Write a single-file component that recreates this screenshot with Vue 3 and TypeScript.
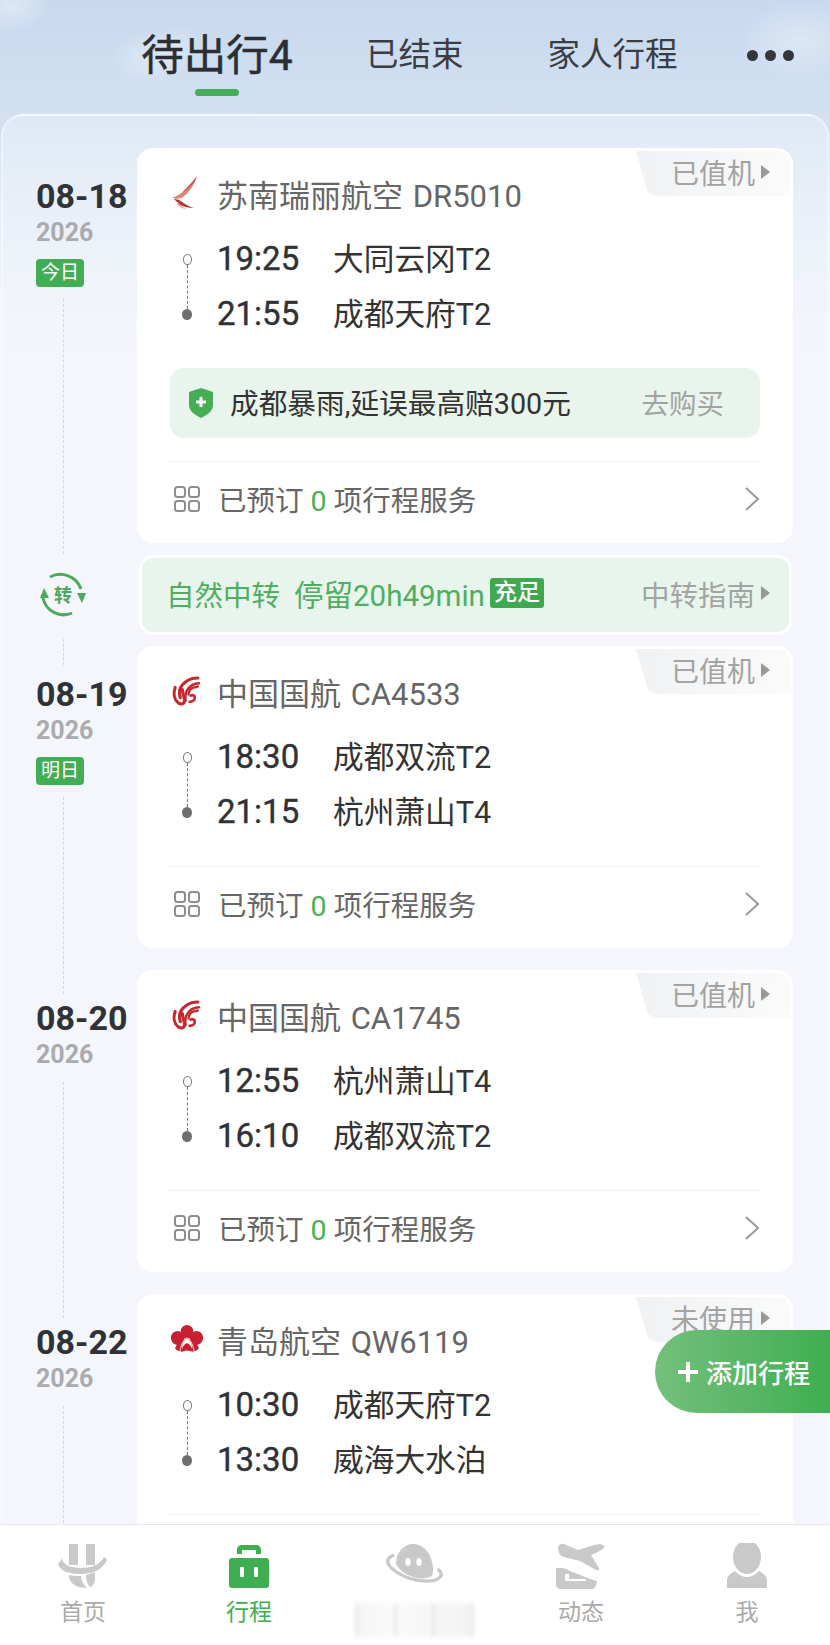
<script setup lang="ts">
interface Leg { time: string; place: string }
interface Trip {
  date: string
  badge?: string
  logo: 'ruili' | 'airchina' | 'qingdao'
  name: string
  status: string
  legs: Leg[]
  insurance?: boolean
  transferAfter?: boolean
  clipped?: boolean
}

const trips: Trip[] = [
  { date: '08-18', badge: '今日', logo: 'ruili', name: '苏南瑞丽航空 DR5010', status: '已值机',
    legs: [{ time: '19:25', place: '大同云冈T2' }, { time: '21:55', place: '成都天府T2' }], insurance: true, transferAfter: true },
  { date: '08-19', badge: '明日', logo: 'airchina', name: '中国国航 CA4533', status: '已值机',
    legs: [{ time: '18:30', place: '成都双流T2' }, { time: '21:15', place: '杭州萧山T4' }] },
  { date: '08-20', logo: 'airchina', name: '中国国航 CA1745', status: '已值机',
    legs: [{ time: '12:55', place: '杭州萧山T4' }, { time: '16:10', place: '成都双流T2' }] },
  { date: '08-22', logo: 'qingdao', name: '青岛航空 QW6119', status: '未使用', clipped: true,
    legs: [{ time: '10:30', place: '成都天府T2' }, { time: '13:30', place: '威海大水泊' }] },
]
const navs = [
  { key: 'home', label: '首页' },
  { key: 'trip', label: '行程' },
  { key: 'planet', label: '' },
  { key: 'news', label: '动态' },
  { key: 'me', label: '我' },
]
</script>

<template>
  <div class="page">
    <header class="tabs">
      <div class="tab-active">
        <span class="tab-active-text">待出行4</span>
        <i class="tab-bar"></i>
      </div>
      <span class="tab tab-a">已结束</span>
      <span class="tab tab-b">家人行程</span>
      <span class="more"><i></i><i></i><i></i></span>
    </header>

    <main class="panel">
      <template v-for="t in trips" :key="t.date">
        <section class="row" :class="{ 'row-ins': t.insurance }">
          <aside class="side">
            <div class="date">{{ t.date }}</div>
            <div class="year">2026</div>
            <div v-if="t.badge" class="badge">{{ t.badge }}</div>
            <div class="rail"></div>
          </aside>
          <article class="card">
            <div class="status">
              <span>{{ t.status }}</span><i class="tri"></i>
            </div>
            <div class="title">
              <span class="logo">
                <svg v-if="t.logo === 'ruili'" viewBox="0 0 30 36" width="30" height="36">
                  <path d="M27 1C22 8 15 14 10 20c4-1 8-7 12-10 2-2 4-5 5-9z" fill="#c8483f"/>
                  <path d="M26 5C20 13 10 20 2 23c4 1 8 1 11-1 5-4 10-10 13-17z" fill="#d9877c"/>
                  <path d="M4 24c3 0 6 1 8 3 4 3 8 5 12 6-5 0-10-1-14-3-2-2-4-4-6-6z" fill="#b8332c"/>
                  <path d="M8 27c2 3 5 6 9 7-4 0-8-2-10-5z" fill="#e3a89e"/>
                </svg>
                <svg v-else-if="t.logo === 'airchina'" viewBox="0 0 30 30" width="31" height="31">
                  <g fill="none" stroke="#c9272e" stroke-linecap="round">
                    <path d="M5 11c-2 6-1 12 3 15 3 2 6 1 6-2 0-4-2-7-2-11" stroke-width="3"/>
                    <path d="M10 21c-2-6 0-12 6-16 3-2 7-3 11-3" stroke-width="3"/>
                    <path d="M15 24c-1-6 1-12 6-15 2-1 4-2 7-2" stroke-width="2.6"/>
                    <path d="M18 18c0-3 2-6 5-7 1 0 3 0 4-1" stroke-width="2.2"/>
                    <path d="M19 25c2 0 5-1 5-4 0-2-2-3-4-2" stroke-width="2.6"/>
                  </g>
                </svg>
                <svg v-else viewBox="0 0 34 30" width="34" height="30">
                  <g fill="#c81f33">
                    <ellipse cx="17" cy="8" rx="6.5" ry="7"/>
                    <ellipse cx="7.5" cy="14" rx="6.5" ry="7" transform="rotate(-20 7.5 14)"/>
                    <ellipse cx="26.5" cy="14" rx="6.5" ry="7" transform="rotate(20 26.5 14)"/>
                    <path d="M5 24c2-5 6-8 8-9-1 5-1 9-1 12-3 1-6-1-7-3z"/>
                    <path d="M29 24c-2-5-6-8-8-9 1 5 1 9 1 12 3 1 6-1 7-3z"/>
                    <path d="M11 28c1-5 3-8 6-9 3 1 5 4 6 9-4-2-8-2-12 0z"/>
                  </g>
                  <path d="M10 27c1-6 4-11 7-13 3 2 6 7 7 13" fill="none" stroke="#f5b5ad" stroke-width="1.3"/>
                </svg>
              </span>
              <span class="name">{{ t.name }}</span>
            </div>
            <div class="legs">
              <div class="path"><i class="dot-o"></i><i class="dash"></i><i class="dot-f"></i></div>
              <div class="leg-list">
                <div v-for="l in t.legs" :key="l.time" class="leg">
                  <span class="time">{{ l.time }}</span>
                  <span class="place">{{ l.place }}</span>
                </div>
              </div>
            </div>
            <div v-if="t.insurance" class="ins">
              <svg class="shield" viewBox="0 0 26 30" width="26" height="30">
                <path d="M13 0l12 4v13c0 6-6 10-12 13C7 27 1 23 1 17V4z" fill="#45ae55"/>
                <path d="M13 9v10M8 14h10" stroke="#fff" stroke-width="3"/>
              </svg>
              <span class="ins-text">成都暴雨,延误最高赔300元</span>
              <span class="ins-buy">去购买</span>
            </div>
            <div class="svc">
              <template v-if="!t.clipped">
                <svg class="grid-ic" viewBox="0 0 28 28" width="28" height="28">
                  <g fill="none" stroke="#8d8d8d" stroke-width="2">
                    <rect x="2" y="2" width="10" height="10" rx="2.5"/>
                    <rect x="16" y="2" width="10" height="10" rx="2.5"/>
                    <rect x="2" y="16" width="10" height="10" rx="2.5"/>
                    <rect x="16" y="16" width="10" height="10" rx="2.5"/>
                  </g>
                </svg>
                <span class="svc-text">已预订 <b>0</b> 项行程服务</span>
                <svg class="chev" viewBox="0 0 16 26" width="16" height="26">
                  <path d="M2 2l12 11L2 24" fill="none" stroke="#999" stroke-width="2"/>
                </svg>
              </template>
            </div>
          </article>
        </section>

        <section v-if="t.transferAfter" class="row transfer-row">
          <aside class="side transfer-side">
            <svg viewBox="0 0 48 48" width="48" height="48">
              <g fill="none" stroke="#4fa95d" stroke-width="3">
                <path d="M11 6A22 22 0 0 1 42 18"/>
                <path d="M33 42A21 21 0 0 1 4 27"/>
              </g>
              <path d="M38 22h9l-4 10zM1 27h9l-5-10z" fill="#4fa95d"/>
              <text x="24" y="31" class="zhuan">转</text>
            </svg>
            <div class="rail tr-rail"></div>
          </aside>
          <div class="transfer">
            <span class="tr-a">自然中转</span>
            <span class="tr-b">停留20h49min</span>
            <span class="tr-badge">充足</span>
            <span class="tr-guide">中转指南</span><i class="tri tr-tri"></i>
          </div>
        </section>
      </template>

      <button class="add" type="button"><i class="plus"></i>添加行程</button>
    </main>

    <nav class="nav">
      <div v-for="n in navs" :key="n.key" class="nav-item" :class="{ on: n.key === 'trip' }">
        <svg v-if="n.key === 'home'" viewBox="0 0 50 44" width="50" height="44">
          <g fill="#c9c9c9">
            <rect x="11" y="0" width="9" height="21"/><rect x="28" y="0" width="9" height="21"/>
            <path d="M0 20c2-2 3-4 4-6 0 6 8 10 18 10 11 0 20-3 24-11 2 1 3 2 3 3-4 9-14 14-26 14C11 30 2 27 0 20z"/>
            <path d="M11 31c4 1 8 1 12 1 0 5 3 9 6 12-10 0-18-4-18-13z"/>
            <path d="M28 31l9-3v6c0 5-2 8-5 9-3-3-4-7-4-12z"/>
          </g>
        </svg>
        <svg v-else-if="n.key === 'trip'" viewBox="0 0 42 44" width="42" height="44">
          <path d="M9 10V6c0-3 2-5 5-5h14c3 0 5 2 5 5v4h-5V6H14v4z" fill="#3fae50"/>
          <rect x="1" y="14" width="40" height="30" rx="3" fill="#3fae50"/>
          <rect x="12" y="23" width="4" height="10" rx="1" fill="#fff"/>
          <rect x="26" y="23" width="4" height="10" rx="1" fill="#fff"/>
        </svg>
        <svg v-else-if="n.key === 'planet'" viewBox="0 0 58 44" width="58" height="44">
          <path d="M8 11C3 13 1 16 2 19c2 6 14 14 28 17 12 2 22 1 25-4 1-3-1-5-3-7" fill="none" stroke="#c9c9c9" stroke-width="3.4"/>
          <path d="M10 20C10 8 18 0 27 0c11 0 19 10 20 24 0 3 0 6-1 8-4 2-8 3-14 2-8-1-18-6-22-14z" fill="#c9c9c9"/>
          <ellipse cx="22" cy="18" rx="2.6" ry="4" fill="#fff"/>
          <ellipse cx="33" cy="18" rx="2.6" ry="4" fill="#fff"/>
        </svg>
        <svg v-else-if="n.key === 'news'" viewBox="0 0 50 46" width="50" height="46">
          <path d="M2 5c0-3 3-5 6-4l14 6 16-5c4-1 9-1 10 1 1 2-3 4-6 6l-7 3 8 13c1 2-1 3-3 2L24 18 8 14C4 13 2 9 2 5z" fill="#c9c9c9"/>
          <path d="M0 25h7l22 9 5 2 7 2-1 4c0 2-2 4-4 4H4c-2 0-4-2-4-4z" fill="#c9c9c9"/>
          <path d="M9 31h4v5h17v2H9z" fill="#fff"/>
        </svg>
        <svg v-else-if="n.key === 'me'" viewBox="0 0 40 44" width="40" height="44">
          <ellipse cx="20" cy="13" rx="14" ry="17" fill="#c9c9c9"/>
          <path d="M0 44V36c0-4 4-7 8-9 4 4 8 6 12 6s8-2 12-6c4 2 8 5 8 9v8z" fill="#c9c9c9"/>
        </svg>
        <span class="nav-label">{{ n.label }}</span>
        <span v-if="n.key === 'planet'" class="smudge"><i></i><i></i><i></i><i></i></span>
      </div>
    </nav>
  </div>
</template>

<style scoped>
.page {
  position: relative;
  width: 830px;
  height: 1645px;
  overflow: hidden;
  display: flex;
  flex-direction: column;
  font-family: Roboto, "Noto Sans CJK SC", sans-serif;
  background:
    radial-gradient(ellipse 40px 28px at 150px 58px, rgba(255,255,255,.32), transparent),
    radial-gradient(ellipse 24px 24px at 178px 48px, rgba(255,255,255,.26), transparent),
    radial-gradient(ellipse 60px 40px at 800px 40px, rgba(255,255,255,.35), transparent),
    radial-gradient(ellipse 40px 26px at 10px 6px, rgba(255,255,255,.4), transparent),
    linear-gradient(#c8d9ee 0, #d3e1f1 130px, #f4f6fb 300px);
}
.tabs {
  height: 114px;
  flex: none;
  display: flex;
  align-items: flex-start;
  color: #333;
}
.tab-active {
  margin-left: 141px;
  width: 152px;
  display: flex;
  flex-direction: column;
  align-items: center;
  padding-top: 30px;
}
.tab-active-text {
  font-size: 42.5px;
  line-height: 52px;
  font-weight: 400;
  color: #2b2e33;
  -webkit-text-stroke: .5px #2b2e33;
  white-space: nowrap;
}
.tab-bar {
  width: 44px;
  height: 7px;
  border-radius: 4px;
  background: #46ad58;
  margin-top: 7px;
}
.tab {
  font-size: 32.5px;
  line-height: 44px;
  margin-top: 33px;
  color: #3a3d42;
  white-space: nowrap;
}
.tab-a { margin-left: 73px; }
.tab-b { margin-left: 84px; }
.more {
  display: flex;
  gap: 7px;
  margin-left: 69px;
  margin-top: 50px;
}
.more i {
  width: 11px;
  height: 11px;
  border-radius: 50%;
  background: #33363b;
}
.panel {
  flex: 1;
  min-height: 0;
  overflow: hidden;
  margin: 0 1px;
  border: 2px solid rgba(255,255,255,.42);
  border-bottom: 0;
  border-radius: 22px 22px 0 0;
  padding: 32px 34px 0 0;
  background: linear-gradient(#dfe9f5 0, #edf2f9 130px, #f4f6fb 240px);
  display: flex;
  flex-direction: column;
  gap: 22px;
}
.row {
  display: flex;
  flex: none;
}
.side {
  width: 134px;
  flex: none;
  box-sizing: border-box;
  padding-left: 33px;
  display: flex;
  flex-direction: column;
  align-items: flex-start;
}
.date {
  margin-top: 28px;
  font-size: 34px;
  line-height: 40px;
  font-weight: 700;
  color: #2f3236;
}
.year {
  font-size: 25px;
  line-height: 30px;
  margin-top: 2px;
  font-weight: 700;
  color: #a9abae;
}
.badge {
  margin-top: 11px;
  width: 48px;
  height: 28px;
  border-radius: 4px;
  background: #43ad55;
  color: #fff;
  font-size: 19px;
  line-height: 28px;
  text-align: center;
}
.rail {
  flex: 1;
  width: 0;
  margin: 12px 0 -46px 27px;
  border-left: 1.5px dashed #d6d8dc;
}
.row-ins .rail { margin-bottom: -11px; }
.card {
  position: relative;
  flex: 1;
  background: #fff;
  border-radius: 16px;
  padding: 0 33px 0 30px;
  height: 302px;
  box-sizing: border-box;
  display: flex;
  flex-direction: column;
}
.row-ins .card { height: 395px; }
.status {
  position: absolute;
  top: 3px;
  right: 2px;
  width: 155px;
  height: 45px;
  box-sizing: border-box;
  padding: 0 20px 4px 35px;
  display: flex;
  align-items: center;
  font-size: 28px;
  color: #a3a3a3;
  background: linear-gradient(100deg, #f0f1f3, #f6f7f8 60%, #fbfbfc);
  clip-path: polygon(0 0, 100% 0, 100% 100%, 20px 100%, 12px 92%);
  border-top-right-radius: 14px;
  white-space: nowrap;
}
.tri {
  width: 0;
  height: 0;
  border-left: 9px solid #999;
  border-top: 7px solid transparent;
  border-bottom: 7px solid transparent;
  margin-left: 6px;
  flex: none;
}
.title {
  display: flex;
  align-items: center;
  height: 40px;
  margin-top: 25px;
}
.logo {
  width: 50px;
  flex: none;
  display: flex;
  align-items: center;
  padding-left: 3px;
  box-sizing: border-box;
}
.name {
  font-size: 31px;
  word-spacing: 2px;
  color: #666;
  white-space: nowrap;
}
.legs {
  display: flex;
  margin-top: 21px;
}
.path {
  width: 50px;
  flex: none;
  display: flex;
  flex-direction: column;
  align-items: center;
  box-sizing: border-box;
  padding: 20px 24px 0 14px;
}
.dot-o {
  width: 9px;
  height: 11px;
  flex: none;
  box-sizing: border-box;
  border: 1.5px solid #777;
  border-radius: 50%;
}
.dash {
  height: 44px;
  width: 0;
  flex: none;
  border-left: 1px dashed #777;
}
.dot-f {
  width: 10px;
  height: 11px;
  flex: none;
  border-radius: 50%;
  background: #6e6e6e;
}
.leg-list {
  display: flex;
  flex-direction: column;
  gap: 11px;
}
.leg {
  display: flex;
  align-items: center;
  height: 44px;
  color: #333;
}
.time {
  width: 116px;
  padding-top: 4px;
  font-size: 33px;
  font-weight: 400;
  color: #303236;
  -webkit-text-stroke: .4px #303236;
}
.place {
  font-size: 30.7px;
  white-space: nowrap;
}
.ins {
  height: 70px;
  flex: none;
  margin: 35px 0 0 3px;
  border-radius: 14px;
  background: #e9f5ec;
  display: flex;
  align-items: center;
  padding: 0 36px 0 18px;
}
.ins-text {
  margin-left: 16px;
  padding-bottom: 3px;
  font-size: 28.7px;
  color: #333;
  flex: 1;
  white-space: nowrap;
}
.ins-buy {
  font-size: 27.5px;
  padding-bottom: 3px;
  color: #a3a3a3;
}
.svc {
  margin-top: auto;
  height: 82px;
  flex: none;
  border-top: 1px solid #f0f0f0;
  display: flex;
  align-items: center;
  padding-bottom: 8px;
  box-sizing: border-box;
}
.grid-ic { margin: 0 17px 0 6px; flex: none; }
.svc-text {
  flex: 1;
  font-size: 28.5px;
  color: #666;
  white-space: nowrap;
}
.svc-text b {
  font-weight: 400;
  color: #4caf50;
}
.chev { flex: none; }
.transfer-row { margin: -10px 0 -11px; }
.transfer-side {
  padding: 16px 0 0 36px;
}
.tr-rail { margin: 20px 0 -30px 24px; }
.zhuan {
  font-size: 18px;
  font-weight: 700;
  fill: #4fa95d;
  text-anchor: middle;
  font-family: "Noto Sans CJK SC", sans-serif;
}
.transfer {
  flex: 1;
  height: 80px;
  margin: 0 1px 0 2px;
  box-sizing: border-box;
  border: 3px solid #fff;
  border-radius: 14px;
  background: #e8f5ec;
  display: flex;
  align-items: center;
  padding: 0 19px 4px 24px;
  color: #4fae5f;
  white-space: nowrap;
}
.tr-a { font-size: 28.5px; }
.tr-b { font-size: 29.5px; margin-left: 14px; }
.tr-badge {
  width: 54px;
  height: 30px;
  margin-left: 5px;
  border-radius: 3px;
  background: #3fa950;
  color: #fff;
  font-size: 23px;
  font-weight: 500;
  line-height: 30px;
  text-align: center;
}
.tr-guide {
  margin-left: auto;
  font-size: 28.5px;
  color: #a3a3a3;
}
.tr-tri { margin-left: 6px; }
.add {
  position: absolute;
  top: 1330px;
  right: 0;
  width: 175px;
  height: 83px;
  border: 0;
  padding: 0 0 0 23px;
  border-radius: 42px 0 0 42px;
  background: linear-gradient(90deg, #74c07c, #3fae50);
  color: #fff;
  font: 500 26px "Noto Sans CJK SC", sans-serif;
  display: flex;
  align-items: center;
  gap: 8px;
  white-space: nowrap;
}
.plus {
  width: 20px;
  height: 20px;
  flex: none;
  background:
    linear-gradient(#fff, #fff) center / 100% 4px no-repeat,
    linear-gradient(#fff, #fff) center / 4px 100% no-repeat;
}
.nav {
  height: 121px;
  flex: none;
  background: #fff;
  border-top: 1px solid #e6e8eb;
  box-sizing: border-box;
  display: grid;
  grid-template-columns: repeat(5, 166px);
  position: relative;
}
.nav-item {
  position: relative;
  display: flex;
  flex-direction: column;
  align-items: center;
  padding-top: 18px;
  color: #aaa;
}
.nav-item svg { height: 46px; flex: none; }
.nav-item.on { color: #3fae50; }
.nav-label {
  font-size: 23px;
  line-height: 32px;
  margin-top: 8px;
}
.smudge {
  position: absolute;
  left: 23px;
  top: 78px;
  width: 119px;
  height: 34px;
  display: flex;
  justify-content: space-between;
  filter: blur(2px);
  background: linear-gradient(90deg, #f4f4f5, #fafafa 30%, #f7f7f8 60%, #f2f2f3);
}
.smudge i { width: 3px; background: #e6e7e8; }
</style>

<style>
body { margin: 0; }
</style>
